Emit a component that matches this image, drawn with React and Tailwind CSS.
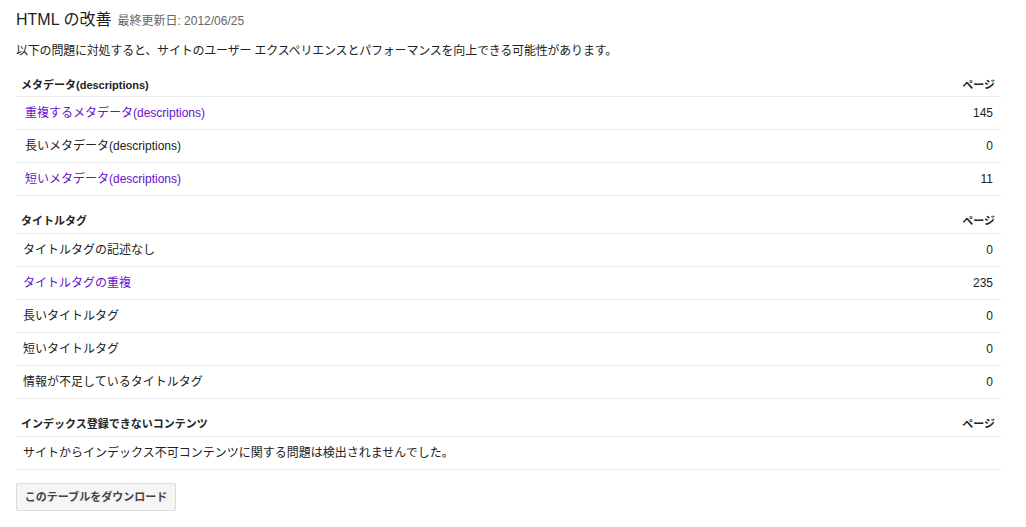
import React from 'react';

const sections = [
  {
    title: 'メタデータ(descriptions)',
    indent: 'pl-[9px]',
    headPad: 'pt-[17px] pb-[3px]',
    rows: [
      { label: '重複するメタデータ(descriptions)', count: '145', link: true },
      { label: '長いメタデータ(descriptions)', count: '0' },
      { label: '短いメタデータ(descriptions)', count: '11', link: true },
    ],
  },
  {
    title: 'タイトルタグ',
    indent: 'pl-[7px]',
    headPad: 'pt-[17px] pb-[4px]',
    rows: [
      { label: 'タイトルタグの記述なし', count: '0' },
      { label: 'タイトルタグの重複', count: '235', link: true },
      { label: '長いタイトルタグ', count: '0' },
      { label: '短いタイトルタグ', count: '0' },
      { label: '情報が不足しているタイトルタグ', count: '0' },
    ],
  },
  {
    title: 'インデックス登録できないコンテンツ',
    indent: 'pl-[7px]',
    headPad: 'pt-[17px] pb-[4px]',
    rows: [
      { label: 'サイトからインデックス不可コンテンツに関する問題は検出されませんでした。', count: '' },
    ],
  },
];

export default function App() {
  return (
    <div
      className="min-h-screen bg-white pl-4 pr-[25px] pt-[10px] text-[#222]"
      style={{ fontFamily: '"Liberation Sans", "Noto Sans CJK JP", sans-serif' }}
    >
      <div className="flex items-baseline gap-[6px] leading-[20px]">
        <span className="text-[16px] text-[#222]">HTML の改善</span>
        <span className="text-[12px] text-[#666]">最終更新日: 2012/06/25</span>
      </div>
      <p className="mt-[11px] text-[12px] leading-[18px] tracking-[-0.2px]">
        以下の問題に対処すると、サイトのユーザー エクスペリエンスとパフォーマンスを向上できる可能性があります。
      </p>

      {sections.map((section) => (
        <div key={section.title}>
          <div
            className={`flex items-center justify-between border-b border-[#ebebeb] pl-[5px] pr-[6px] text-[11px] font-bold leading-[16px] ${section.headPad}`}
          >
            <span>{section.title}</span>
            <span>ページ</span>
          </div>
          {section.rows.map((row) => (
            <div
              key={row.label}
              className={`flex h-[33px] items-center justify-between border-b border-[#ebebeb] pr-[8px] text-[12px] ${section.indent}`}
            >
              <span className={row.link ? 'text-[#6611cc]' : 'text-[#222]'}>{row.label}</span>
              <span>{row.count}</span>
            </div>
          ))}
        </div>
      ))}

      <button className="mt-[13px] h-[28px] w-[160px] rounded-[2px] border border-[#dcdcdc] bg-[#f5f5f5] text-[11px] font-bold text-[#444]">
        このテーブルをダウンロード
      </button>
    </div>
  );
}
